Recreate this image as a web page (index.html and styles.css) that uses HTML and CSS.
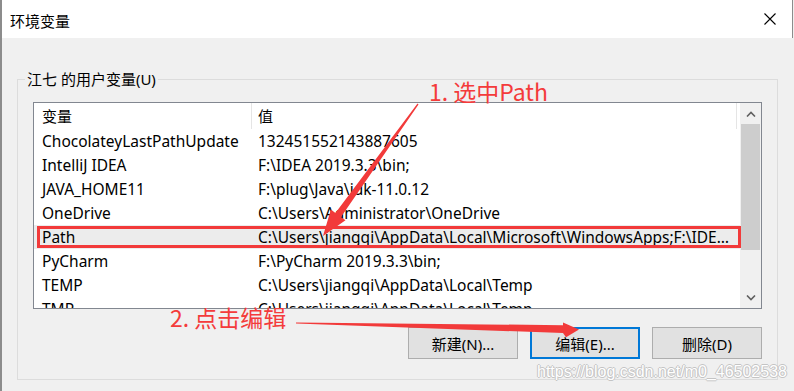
FILE: index.html
```html
<!DOCTYPE html>
<html lang="zh-CN">
<head>
    <meta charset="UTF-8">
    <title>环境变量</title>
    <link rel="stylesheet" href="styles.css">
</head>
<body>

    <div class="window">
        <div class="titlebar">
            <span class="title">环境变量</span>
            <svg class="close" width="12" height="12" viewBox="0 0 12 12">
                <path d="M0.5 0.5 L11.5 11.5 M11.5 0.5 L0.5 11.5" stroke="#000" stroke-width="1.1" fill="none"/>
            </svg>
        </div>

        <fieldset class="group">
            <legend>江七 的用户变量(U)</legend>

            <div class="listview">
                <div class="list-main">
                    <div class="list-head">
                        <div class="cell name">变量</div>
                        <div class="cell value">值</div>
                    </div>
                    <div class="row"><div class="cell name">ChocolateyLastPathUpdate</div><div class="cell value">132451552143887605</div></div>
                    <div class="row"><div class="cell name">IntelliJ IDEA</div><div class="cell value">F:\IDEA 2019.3.3\bin;</div></div>
                    <div class="row"><div class="cell name">JAVA_HOME11</div><div class="cell value">F:\plug\Java\jdk-11.0.12</div></div>
                    <div class="row"><div class="cell name">OneDrive</div><div class="cell value">C:\Users\Administrator\OneDrive</div></div>
                    <div class="row selected"><div class="cell name">Path</div><div class="cell value">C:\Users\jiangqi\AppData\Local\Microsoft\WindowsApps;F:\IDEA 2019.3.3\bin;</div></div>
                    <div class="row"><div class="cell name">PyCharm</div><div class="cell value">F:\PyCharm 2019.3.3\bin;</div></div>
                    <div class="row"><div class="cell name">TEMP</div><div class="cell value">C:\Users\jiangqi\AppData\Local\Temp</div></div>
                    <div class="row"><div class="cell name">TMP</div><div class="cell value">C:\Users\jiangqi\AppData\Local\Temp</div></div>
                </div>

                <!-- scrollbar -->
                <div class="scrollbar">
                    <div class="sb-btn">
                        <svg width="10" height="6" viewBox="0 0 10 6"><path d="M1 5.5 L5 1.5 L9 5.5" stroke="#606060" stroke-width="1.6" fill="none"/></svg>
                    </div>
                    <div class="sb-track"><div class="sb-thumb"></div></div>
                    <div class="sb-btn">
                        <svg width="10" height="6" viewBox="0 0 10 6"><path d="M1 0.5 L5 4.5 L9 0.5" stroke="#606060" stroke-width="1.6" fill="none"/></svg>
                    </div>
                </div>
            </div>

            <div class="buttons">
                <button>新建(N)...</button>
                <button class="default">编辑(E)...</button>
                <button>删除(D)</button>
            </div>
        </fieldset>
    </div>

    <!-- red annotations drawn over the screenshot -->
    <div class="mark-box"></div>
    <svg class="arrows" width="794" height="391" viewBox="0 0 794 391">
        <polygon fill="#f23a3a" points="418.5,104.4 341,216.9 345.5,220.2 323,236 330.9,209.6 335.4,212.9 417.5,103.6"/>
        <polygon fill="#f23a3a" points="296,322.4 563,325.2 563,322.4 579,329.4 566,337.2 563,333 296,323.6"/>
    </svg>
    <div class="note note-1">1. 选中Path</div>
    <div class="note note-2">2. 点击编辑</div>
    <div class="watermark">https://blog.csdn.net/m0_46502538</div>

</body>
</html>
```

FILE: styles.css
```css
body {
    margin: 0;
    width: 794px;
    height: 391px;
    position: relative;
    overflow: hidden;
    background-color: #f0f0f0;
    font-family: "Noto Sans", "Noto Sans CJK SC", sans-serif;
    font-size: 15px;
    color: #000;
}

.window {
    width: 794px;
    height: 391px;
    box-sizing: border-box;
    border-left: 2px solid #8c8c8c;
    background-color: #f0f0f0;
}

.titlebar {
    height: 38px;
    background-color: #fff;
    display: flex;
    align-items: center;
    justify-content: space-between;
    padding: 0 16px 0 8px;
    border-right: 1px solid #8c8c8c;
    margin-right: 1px;
}

.title {
    font-size: 15px;
    margin-top: 2px;
}

.close {
    display: block;
}

.group {
    margin: 31px 16px 0 15px;
    padding: 13px 15px 20px 7px;
    border: 1px solid #dcdcdc;
    min-width: 0;
}

.group legend {
    padding: 0 2px;
    line-height: 20px;
    font-size: 15px;
}

.listview {
    margin-left: 8px;
    height: 207px;
    box-sizing: border-box;
    border: 1px solid #828790;
    background-color: #fff;
    display: flex;
    font-size: 15.5px;
}

.list-main {
    flex: 1;
    min-width: 0;
    overflow: hidden;
}

.list-head {
    height: 26px;
    display: grid;
    grid-template-columns: 218px 485px;
}

.list-head .cell {
    border-right: 1px solid #e5e5e5;
    line-height: 26px;
    font-size: 15px;
}

.row {
    height: 24px;
    display: grid;
    grid-template-columns: 218px 1fr;
    line-height: 24px;
}

.row.selected {
    background-color: #ececec;
}

.cell {
    white-space: nowrap;
    overflow: hidden;
    text-overflow: ellipsis;
}

.cell.name {
    padding-left: 8px;
}

.cell.value {
    padding-left: 6px;
    padding-right: 6px;
}

.scrollbar {
    width: 21px;
    background-color: #f0f0f0;
    display: flex;
    flex-direction: column;
}

.sb-btn {
    height: 21px;
    display: flex;
    align-items: center;
    justify-content: center;
}

.sb-track {
    flex: 1;
}

.sb-thumb {
    height: 126px;
    margin: 0 1px;
    background-color: #cdcdcd;
}

.buttons {
    margin-top: 18px;
    display: flex;
    justify-content: flex-end;
    gap: 12px;
}

.buttons button {
    width: 110px;
    height: 32px;
    box-sizing: border-box;
    background-color: #e1e1e1;
    border: 1px solid #adadad;
    border-radius: 0;
    font-family: "Noto Sans", "Noto Sans CJK SC", sans-serif;
    font-size: 15px;
    color: #000;
    padding: 0;
}

.buttons button.default {
    border: 2px solid #0078d7;
}

/* annotations */
.mark-box {
    position: absolute;
    left: 37px;
    top: 226px;
    width: 704px;
    height: 22px;
    box-sizing: border-box;
    border: 3px solid #f23a3a;
}

.arrows {
    position: absolute;
    left: 0;
    top: 0;
}

.note {
    position: absolute;
    color: #f43b3b;
    font-family: "Noto Sans CJK SC", sans-serif;
    line-height: 26px;
    white-space: nowrap;
}

.note-1 {
    left: 429px;
    top: 78px;
    font-size: 23px;
}

.note-2 {
    left: 170px;
    top: 304px;
    font-size: 23px;
}

.watermark {
    position: absolute;
    left: 537px;
    top: 362px;
    font-family: "Liberation Sans", sans-serif;
    font-size: 16px;
    line-height: 20px;
    color: #fff;
    text-shadow: 1px 0 #c4c4c4, -1px 0 #c4c4c4, 0 1px #c4c4c4, 0 -1px #c4c4c4;
}
```
